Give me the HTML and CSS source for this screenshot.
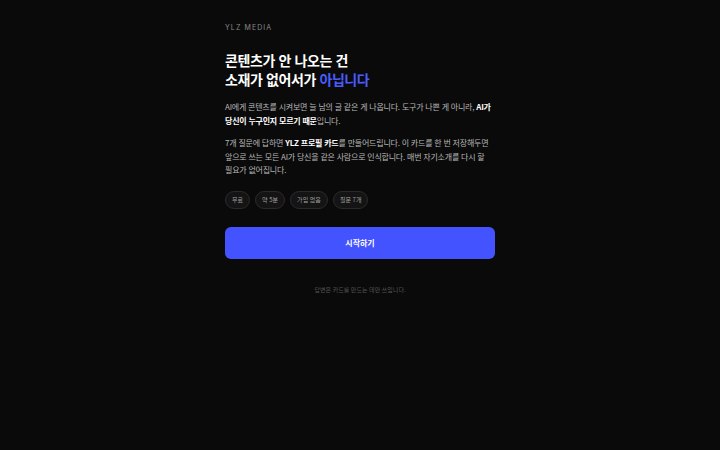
FILE: index.html
```html
<!DOCTYPE html>
<html lang="ko">
<head>
<meta charset="utf-8">
<link rel="stylesheet" href="styles.css">
</head>
<body>
<main class="wrap">
  <div class="brand">YLZ MEDIA</div>
  <h1 class="title">콘텐츠가 안 나오는 건<br>소재가 없어서가 <span class="accent">아닙니다</span></h1>
  <p class="text p1">AI에게 콘텐츠를 시켜보면 늘 남의 글 같은 게 나옵니다. 도구가 나쁜 게 아니라, <b>AI가 당신이 누구인지 모르기 때문</b>입니다.</p>
  <p class="text p2">7개 질문에 답하면 <b>YLZ 프로필 카드</b>를 만들어드립니다. 이 카드를 한 번 저장해두면 앞으로 쓰는 모든 AI가 당신을 같은 사람으로 인식합니다. 매번 자기소개를 다시 할 필요가 없어집니다.</p>
  <div class="chips">
    <span class="chip">무료</span>
    <span class="chip">약 5분</span>
    <span class="chip">가입 없음</span>
    <span class="chip">질문 7개</span>
  </div>
  <button class="start">시작하기</button>
  <p class="foot">답변은 카드를 만드는 데만 쓰입니다.</p>
</main>
</body>
</html>
```
FILE: styles.css
```css
html, body {
  margin: 0;
  padding: 0;
  background: #0a0a0a;
  height: 100%;
}
body {
  font-family: "Noto Sans CJK KR", "Noto Sans", sans-serif;
  color: #fff;
}
.wrap {
  width: 270px;
  margin: 0 auto;
  padding-top: 23px;
  display: flex;
  flex-direction: column;
}
.brand {
  font-size: 7px;
  line-height: 10px;
  letter-spacing: 1.1px;
  color: #8a8a8a;
  font-family: "Inter", "Noto Sans", sans-serif;
}
.title {
  margin: 18px 0 0;
  font-size: 14px;
  line-height: 19px;
  font-weight: 700;
  letter-spacing: -0.4px;
  color: #fff;
}
.accent { color: #4a5cff; }
.text {
  margin: 0;
  font-size: 8px;
  line-height: 13.5px;
  color: #b8b8b8;
  letter-spacing: -0.22px;
  word-break: keep-all;
}
.text b { color: #fff; font-weight: 700; }
.p1 { margin-top: 11px; }
.p2 { margin-top: 9px; }
.chips {
  display: flex;
  gap: 5px;
  margin-top: 14px;
}
.chip {
  height: 18px;
  box-sizing: border-box;
  padding: 0 6px;
  border: 1px solid #2a2a2a;
  background: #141414;
  border-radius: 9px;
  font-size: 6px;
  line-height: 16px;
  color: #a0a0a0;
}
.start {
  margin-top: 18px;
  height: 32px;
  border: 0;
  border-radius: 6px;
  background: #4353ff;
  color: #fff;
  font-family: inherit;
  font-size: 8px;
  font-weight: 700;
  padding: 0;
}
.foot {
  margin: 26px 0 0;
  text-align: center;
  font-size: 6px;
  line-height: 9px;
  color: #555;
}
```
